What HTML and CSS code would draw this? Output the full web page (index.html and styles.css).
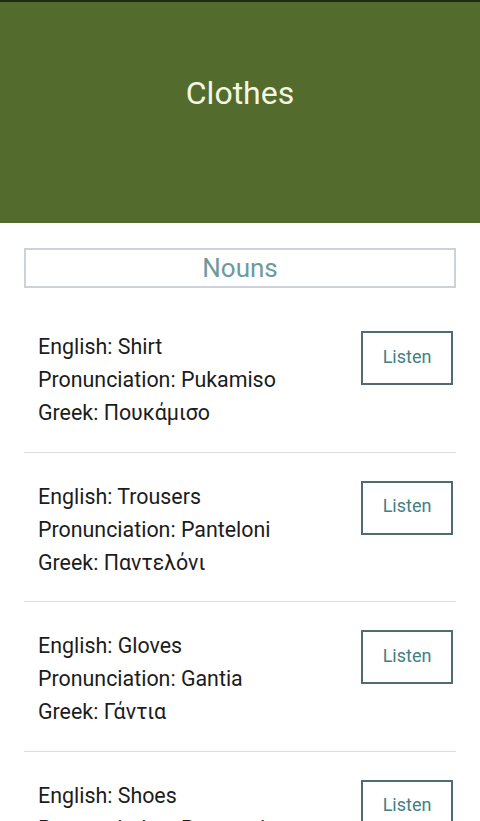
FILE: index.html
```html
<!DOCTYPE html>
<html>
<head>
<meta charset="utf-8">
<link rel="stylesheet" href="styles.css">
</head>
<body>
<header class="topbar">
  <h1 class="title">Clothes</h1>
</header>
<main class="content">
  <div class="section-box">Nouns</div>
  <ul class="words">
    <li class="word">
      <div class="info">
        <div>English: Shirt</div>
        <div>Pronunciation: Pukamiso</div>
        <div>Greek: Πουκάμισο</div>
      </div>
      <button class="listen">Listen</button>
    </li>
    <li class="word">
      <div class="info">
        <div>English: Trousers</div>
        <div>Pronunciation: Panteloni</div>
        <div>Greek: Παντελόνι</div>
      </div>
      <button class="listen">Listen</button>
    </li>
    <li class="word">
      <div class="info">
        <div>English: Gloves</div>
        <div>Pronunciation: Gantia</div>
        <div>Greek: Γάντια</div>
      </div>
      <button class="listen">Listen</button>
    </li>
    <li class="word">
      <div class="info">
        <div>English: Shoes</div>
        <div>Pronunciation: Papoutsia</div>
        <div>Greek: Παπούτσια</div>
      </div>
      <button class="listen">Listen</button>
    </li>
  </ul>
</main>
</body>
</html>
```
FILE: styles.css
```css
* { box-sizing: border-box; }
html, body {
  margin: 0;
  padding: 0;
  background: #ffffff;
  font-family: Roboto, "Noto Sans", sans-serif;
  overflow: hidden;
  height: 821px;
}
.topbar {
  height: 223px;
  background: #546b2e;
  border-top: 2px solid #1e2a14;
  display: flex;
  justify-content: center;
  padding-top: 71px;
}
.title {
  margin: 0;
  font-weight: 400;
  font-size: 32px;
  line-height: 40px;
  color: #f4f7e2;
}
.content {
  padding: 25px 24px 0 24px;
}
.section-box {
  height: 40px;
  border: 2px solid #cdd1da;
  text-align: center;
  font-size: 26px;
  line-height: 36px;
  color: #6e9a9c;
}
.words {
  list-style: none;
  margin: 15px 0 0 0;
  padding: 0;
}
.word {
  display: flex;
  justify-content: space-between;
  align-items: flex-start;
  padding: 28px 3px 20px 14px;
  border-bottom: 1px solid #dcdcdc;
  height: 149.5px;
}
.info {
  margin-top: -1px;
  font-size: 21.4px;
  line-height: 33px;
  color: #1c1c1c;
}
.listen {
  width: 92px;
  height: 54px;
  background: #ffffff;
  border: 2px solid #4f6d71;
  font-family: Roboto, "Noto Sans", sans-serif;
  font-size: 18px;
  color: #3f8087;
  padding: 0 0 4px 0;
}
```
